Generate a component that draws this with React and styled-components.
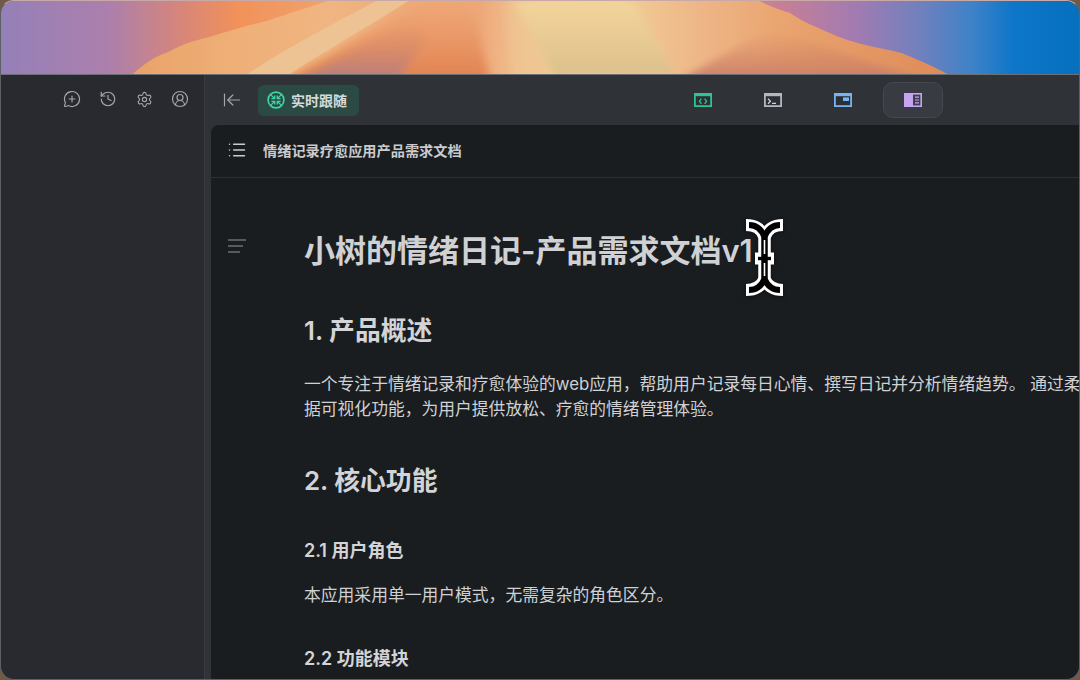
import React from "react";
import styled, { createGlobalStyle } from "styled-components";
import { History, Settings, CircleUserRound, ArrowLeftToLine, List, MessageCirclePlus } from "lucide-react";

const GlobalStyle = createGlobalStyle`
  html, body {
    margin: 0;
    padding: 0;
    background: #6f5a48;
    overflow: hidden;
  }
  * {
    box-sizing: border-box;
  }
`;

const Screen = styled.div`
  position: relative;
  width: 1080px;
  height: 680px;
  display: flex;
  flex-direction: column;
  overflow: hidden;
  border-radius: 14px;
  border: 1px solid #5d6066;
  border-top-color: #c9a9a8;
  font-family: Inter, "Noto Sans CJK SC", sans-serif;
`;

const WallpaperBox = styled.div`
  height: 73px;
  flex: none;
  svg {
    display: block;
    width: 100%;
    height: 100%;
  }
`;

const AppWindow = styled.div`
  flex: 1;
  min-height: 0;
  display: flex;
  border-top: 1px solid #6c7074;
`;

const Sidebar = styled.aside`
  width: 204px;
  flex: none;
  background: #282a2f;
  border-right: 1px solid #383b40;
  display: flex;
  justify-content: flex-end;
  align-items: flex-start;
  gap: 18px;
  padding: 15px 15px 0 0;
  color: #a3a5a9;
`;

const SideIcon = styled.span`
  width: 18px;
  height: 18px;
  display: flex;
  align-items: center;
  justify-content: center;
`;

const Main = styled.main`
  flex: 1;
  min-width: 0;
  display: flex;
  flex-direction: column;
  background: #2f3337;
`;

const Toolbar = styled.div`
  height: 50px;
  flex: none;
  display: flex;
  align-items: center;
  padding-left: 17px;
`;

const Collapse = styled.span`
  display: flex;
  color: #a5a7aa;
  margin-right: 16px;
`;

const FollowButton = styled.div`
  width: 101px;
  height: 31px;
  display: flex;
  align-items: center;
  gap: 6px;
  padding-left: 9px;
  border-radius: 6px;
  background: #2b4a43;
  color: #d6dad9;
  font-size: 14px;
  font-weight: 600;
  white-space: nowrap;
`;

const Tabs = styled.div`
  display: flex;
  align-items: center;
  gap: 10px;
  margin-left: 314px;
`;

const Tab = styled.div`
  width: 60px;
  height: 36px;
  display: flex;
  align-items: center;
  justify-content: center;
  border-radius: 10px;
  background: ${(p) => (p.$active ? "#383c42" : "transparent")};
  border: 1px solid ${(p) => (p.$active ? "#44484d" : "transparent")};
`;

const Doc = styled.section`
  flex: 1;
  min-height: 0;
  margin-left: 6px;
  display: flex;
  flex-direction: column;
  overflow: hidden;
  background: #1a1d20;
  border-top-left-radius: 8px;
`;

const DocHeader = styled.header`
  height: 53px;
  flex: none;
  display: flex;
  align-items: center;
  gap: 16px;
  padding: 0 0 2px 16px;
  border-bottom: 1px solid #2c2f33;
  color: #c9cbce;
  font-size: 14.2px;
  font-weight: 600;
  white-space: nowrap;
  svg {
    color: #c9cbce;
  }
`;

const DocBody = styled.div`
  flex: 1;
  min-height: 0;
  display: flex;
  padding: 51px 0 0 16px;
`;

const Outline = styled.span`
  flex: none;
  width: 77px;
  display: block;
  padding-top: 10px;
  color: #94969a;
  svg {
    display: block;
  }
`;

const Article = styled.article`
  flex: none;
  width: 965px;
  color: #d4d6d9;
`;

const Title = styled.h1`
  margin: 0 0 40px;
  font-size: 31px;
  line-height: 44px;
  font-weight: 600;
  color: #cfd1d4;
`;

const Heading = styled.h2`
  margin: 0 0 ${(p) => p.$after}px;
  font-size: 25.8px;
  line-height: 36px;
  font-weight: 600;
  color: #d2d4d7;
`;

const SubHeading = styled.h3`
  margin: 0 0 18px;
  font-size: 18px;
  line-height: 28px;
  font-weight: 600;
  color: #d2d4d7;
`;

const Para = styled.p`
  margin: 0 0 ${(p) => p.$after}px;
  font-size: 16.8px;
  line-height: 25px;
  font-weight: 400;
  color: #cfd1d4;
`;

const Cursor = styled.svg`
  position: absolute;
  left: 739px;
  top: 211px;
  filter: drop-shadow(0 1px 2px rgba(0, 0, 0, 0.5));
`;

const Wallpaper = () => (
  <WallpaperBox>
    <svg viewBox="0 0 1080 74" preserveAspectRatio="none">
      <defs>
        <linearGradient id="base" gradientUnits="userSpaceOnUse" x1="0" x2="1080" y1="0" y2="0">
          <stop offset="0" stopColor="#9480b8" />
          <stop offset="0.1" stopColor="#ac7fac" />
          <stop offset="0.17" stopColor="#d98678" />
          <stop offset="0.22" stopColor="#f19259" />
          <stop offset="0.3" stopColor="#f0a26c" />
          <stop offset="0.5" stopColor="#eda672" />
          <stop offset="0.72" stopColor="#c87f95" />
          <stop offset="0.79" stopColor="#a47bb0" />
          <stop offset="0.85" stopColor="#7380bd" />
          <stop offset="0.9" stopColor="#3f82c8" />
          <stop offset="0.94" stopColor="#0d76c9" />
          <stop offset="1" stopColor="#0670bf" />
        </linearGradient>
        <linearGradient id="sun" gradientUnits="userSpaceOnUse" x1="130" x2="950" y1="0" y2="0">
          <stop offset="0" stopColor="#e8a268" />
          <stop offset="0.134" stopColor="#efb078" />
          <stop offset="0.244" stopColor="#f0b582" />
          <stop offset="0.354" stopColor="#efa878" />
          <stop offset="0.427" stopColor="#eea878" />
          <stop offset="0.458" stopColor="#f0b888" />
          <stop offset="0.488" stopColor="#f2c995" />
          <stop offset="0.573" stopColor="#f2d29a" />
          <stop offset="0.634" stopColor="#f0c590" />
          <stop offset="0.695" stopColor="#eeb688" />
          <stop offset="0.793" stopColor="#eaa570" />
          <stop offset="1" stopColor="#de8a58" />
        </linearGradient>
        <linearGradient id="beam" x1="0" x2="0" y1="0" y2="1">
          <stop offset="0" stopColor="#f3d59b" />
          <stop offset="1" stopColor="#dcc08c" />
        </linearGradient>
        <linearGradient id="dusk" x1="0" x2="0" y1="0" y2="1">
          <stop offset="0" stopColor="#e48a5c" stopOpacity="0" />
          <stop offset="1" stopColor="#b47f82" />
        </linearGradient>
        <linearGradient id="ember" x1="0" x2="0" y1="0" y2="1">
          <stop offset="0" stopColor="#e88a58" stopOpacity="0" />
          <stop offset="1" stopColor="#e0824f" />
        </linearGradient>
        <linearGradient id="lowDune" x1="0" x2="0" y1="0" y2="1">
          <stop offset="0" stopColor="#d98a62" stopOpacity="0" />
          <stop offset="1" stopColor="#c87e68" />
        </linearGradient>
        <filter id="soft" x="-20%" y="-20%" width="140%" height="140%">
          <feGaussianBlur stdDeviation="4" />
        </filter>
        <filter id="softer" x="-5%" y="-5%" width="110%" height="110%">
          <feGaussianBlur stdDeviation="0.7" />
        </filter>
      </defs>
      <rect width="1080" height="74" fill="url(#base)" />
      <path
        d="M130 76 C145 62 155 56 167 52 C185 42 195 40 207 37 C230 30 250 24 267 20 C290 12 310 6 327 0 L760 0 C772 6 780 9 790 12 C800 19 810 24 820 28 C835 35 848 40 860 43 C875 47 890 49 903 53 C920 60 935 67 952 76 Z"
        fill="url(#sun)"
        filter="url(#softer)"
      />
      <path d="M286 80 L420 0 L470 0 L490 80 Z" fill="url(#ember)" filter="url(#soft)" />
      <path d="M300 80 L410 18 L425 40 L397 80 Z" fill="url(#dusk)" filter="url(#soft)" />
      <path d="M244 76 C290 45 335 22 376 0 L408 0 C370 25 325 50 286 76 Z" fill="#eec393" filter="url(#softer)" />
      <path d="M515 80 L505 0 L520 0 L554 80 Z" fill="#eec593" opacity="0.7" filter="url(#soft)" />
      <path d="M554 76 L515 0 L633 0 L676 76 Z" fill="url(#beam)" filter="url(#soft)" />
      <path d="M770 28 L925 80 L680 80 Z" fill="url(#lowDune)" filter="url(#soft)" />
    </svg>
  </WallpaperBox>
);

const FollowIcon = () => (
  <svg width="18" height="18" viewBox="0 0 18 18" fill="none" stroke="#3fd6a5">
    <circle cx="9" cy="9" r="7.9" strokeWidth="1.6" />
    <path
      d="M3.6 3.6l3.8 3.8M7.7 4.4v3.3H4.4M14.4 3.6l-3.8 3.8M10.3 4.4v3.3h3.3M3.6 14.4l3.8-3.8M7.7 13.6v-3.3H4.4M14.4 14.4l-3.8-3.8M10.3 13.6v-3.3h3.3"
      strokeWidth="1.3"
    />
  </svg>
);

const FrameIcon = ({ color, children }) => (
  <svg width="18" height="14" viewBox="0 0 18 14">
    <rect x="0.9" y="0.9" width="16.2" height="12.2" fill="#2a3035" stroke={color} strokeWidth="1.8" />
    <rect x="0" y="0" width="18" height="3.2" fill={color} />
    {children}
  </svg>
);

const BookIcon = () => (
  <svg width="18" height="14" viewBox="0 0 18 14">
    <rect width="18" height="14" fill="#c5a5f0" />
    <rect x="9" y="1.6" width="7.4" height="10.8" fill="#3f3d50" />
    <path d="M11 4.2h4M11 7h4M11 9.8h4" stroke="#c5a5f0" strokeWidth="1.2" />
  </svg>
);

const IBeam = () => (
  <Cursor width="50" height="90" viewBox="0 0 50 90" fill="none">
    <g stroke="#fff" strokeWidth="12">
      <path d="M6 13C15 13 21 16 24.5 25V67C21 75 15 78 6 78" />
      <path d="M43 13C34 13 28 16 24.5 25V67C28 75 34 78 43 78" />
      <path d="M15 46.5H34" />
    </g>
    <g stroke="#000" strokeWidth="6">
      <path d="M9 13C15 13 21 16 24.5 25V67C21 75 15 78 9 78" />
      <path d="M40 13C34 13 28 16 24.5 25V67C28 75 34 78 40 78" />
    </g>
    <path d="M24.5 28V42M24.5 51V64" stroke="#fff" strokeWidth="1.6" />
    <path d="M18 46.5H31" stroke="#000" strokeWidth="3.4" />
  </Cursor>
);

const App = () => {
  return (
    <>
      <GlobalStyle />
      <Screen>
        <Wallpaper />
        <AppWindow>
          <Sidebar>
            <SideIcon>
              <MessageCirclePlus size={18} strokeWidth={1.6} />
            </SideIcon>
            <SideIcon>
              <History size={18} strokeWidth={1.6} />
            </SideIcon>
            <SideIcon>
              <Settings size={17} strokeWidth={1.6} />
            </SideIcon>
            <SideIcon>
              <CircleUserRound size={18} strokeWidth={1.6} />
            </SideIcon>
          </Sidebar>
          <Main>
            <Toolbar>
              <Collapse>
                <ArrowLeftToLine size={20} strokeWidth={1.4} />
              </Collapse>
              <FollowButton>
                <FollowIcon />
                实时跟随
              </FollowButton>
              <Tabs>
                <Tab>
                  <FrameIcon color="#2fc48f">
                    <path d="M7.4 5.6L5.4 8.2l2 2.6M10.6 5.6l2 2.6-2 2.6" stroke="#2fc48f" strokeWidth="1.3" fill="none" />
                  </FrameIcon>
                </Tab>
                <Tab>
                  <FrameIcon color="#b5b7be">
                    <path d="M4 5.6L6.4 8.2 4 10.8" stroke="#d0d2d8" strokeWidth="1.3" fill="none" />
                    <path d="M8 10.4h4" stroke="#d0d2d8" strokeWidth="1.3" />
                  </FrameIcon>
                </Tab>
                <Tab>
                  <FrameIcon color="#79b4ee">
                    <rect x="9" y="4.4" width="6" height="3.6" fill="#79b4ee" />
                  </FrameIcon>
                </Tab>
                <Tab $active>
                  <BookIcon />
                </Tab>
              </Tabs>
            </Toolbar>
            <Doc>
              <DocHeader>
                <List size={20} strokeWidth={1.8} />
                情绪记录疗愈应用产品需求文档
              </DocHeader>
              <DocBody>
                <Outline>
                  <svg width="20" height="14" viewBox="0 0 20 14" stroke="currentColor" strokeWidth="1.2">
                    <path d="M1 1h18M1 7h15M1 13h12" />
                  </svg>
                </Outline>
                <Article>
                  <Title>小树的情绪日记-产品需求文档v1</Title>
                  <Heading $after={23}>1. 产品概述</Heading>
                  <Para $after={41}>
                    一个专注于情绪记录和疗愈体验的web应用，帮助用户记录每日心情、撰写日记并分析情绪趋势。 通过柔和的界面设计和直观的数据可视化功能，为用户提供放松、疗愈的情绪管理体验。
                  </Para>
                  <Heading $after={38}>2. 核心功能</Heading>
                  <SubHeading>2.1 用户角色</SubHeading>
                  <Para $after={37}>本应用采用单一用户模式，无需复杂的角色区分。</Para>
                  <SubHeading>2.2 功能模块</SubHeading>
                </Article>
              </DocBody>
            </Doc>
          </Main>
        </AppWindow>
        <IBeam />
      </Screen>
    </>
  );
};

export default App;
